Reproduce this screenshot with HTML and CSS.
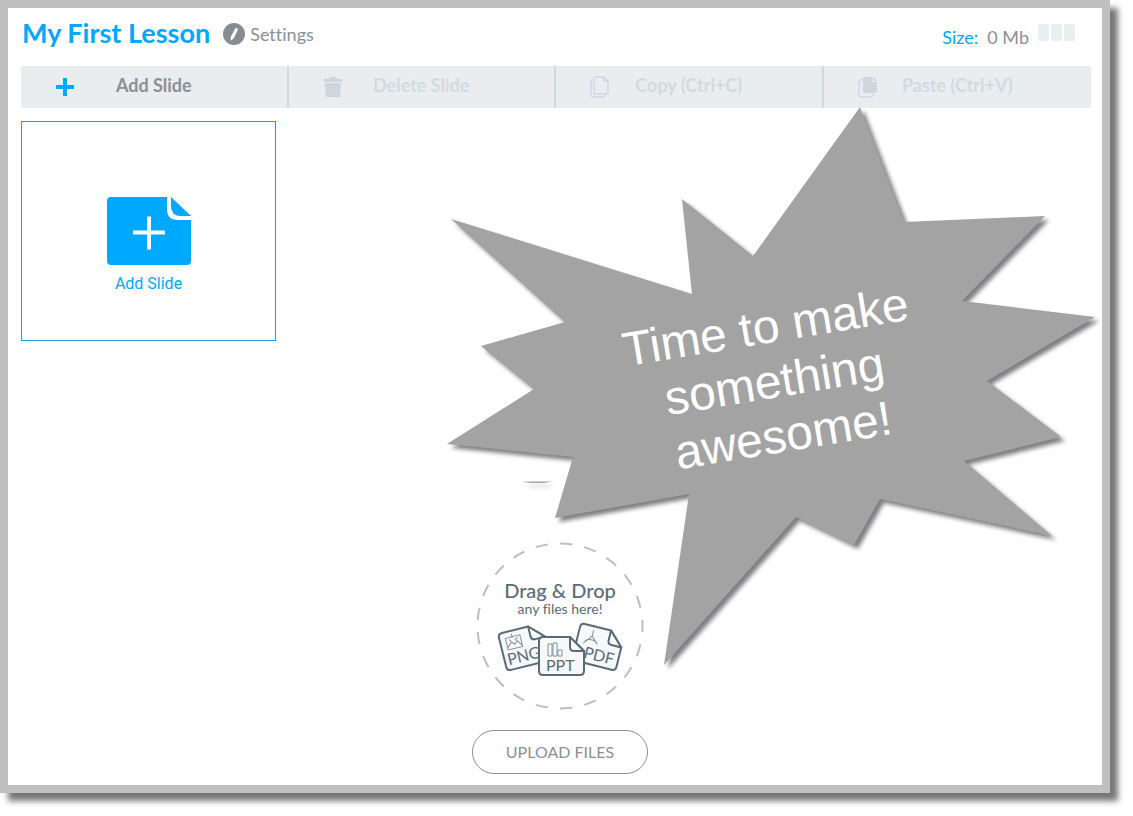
FILE: index.html
```html
<!DOCTYPE html>
<html lang="en">
<head>
<meta charset="utf-8">
<title>My First Lesson</title>
<link rel="stylesheet" href="styles.css">
</head>
<body>
<main class="frame">
  <header class="header">
    <h1 class="title">My First Lesson</h1>
    <button class="settings" type="button">
      <svg class="settings-icon" viewBox="0 0 22 22" aria-hidden="true">
        <circle cx="11" cy="11" r="11" fill="#868c92"/>
        <path d="M12.6 4.8l2.6 1.2-4.6 9.400-3 2.400.2-3.800z" fill="#fff"/>
      </svg>
      Settings
    </button>
    <div class="size">
      <span class="size-label">Size:</span>
      <span class="size-value">0 Mb</span>
      <span class="meter"><i></i><i></i><i></i></span>
    </div>
  </header>

  <nav class="toolbar" aria-label="Slide actions">
    <button class="tool" type="button">
      <svg class="tool-icon" viewBox="0 0 22 22" aria-hidden="true"><path d="M2 11h18M11 2v18" stroke="#00a8ff" stroke-width="4"/></svg>
      <span class="tool-label">Add Slide</span>
    </button>
    <button class="tool" type="button" disabled>
      <svg class="tool-icon" viewBox="0 0 22 22" aria-hidden="true"><path d="M2 3h5l1-2h6l1 2h5v3H2zM3 7h16l-1 14H4z" fill="#cfd5d8"/></svg>
      <span class="tool-label">Delete Slide</span>
    </button>
    <button class="tool" type="button" disabled>
      <svg class="tool-icon" viewBox="0 0 22 22" aria-hidden="true"><g fill="none" stroke="#d3d8db" stroke-width="1.5" stroke-linejoin="round"><path d="M7 1h8l4 4v11q0 2-2 2H7q-2 0-2-2V3q0-2 2-2z"/><path d="M15 1v4h4M5 4q-3 0-3 2v13q0 2 2 2h9q3 0 3-3"/></g></svg>
      <span class="tool-label">Copy (Ctrl+C)</span>
    </button>
    <button class="tool" type="button" disabled>
      <svg class="tool-icon" viewBox="0 0 22 22" aria-hidden="true"><path d="M8 1h7v5h5v9q0 2-2 2H8q-2 0-2-2V3q0-2 2-2zM16 1l4 4h-4z" fill="#cfd5d8"/><path d="M6 4H4Q2 4 2 6v13q0 2 2 2h10q2 0 2-3" fill="none" stroke="#d3d8db" stroke-width="1.5"/></svg>
      <span class="tool-label">Paste (Ctrl+V)</span>
    </button>
  </nav>

  <button class="slide-card" type="button">
    <svg class="slide-icon" viewBox="0 0 84 68" aria-hidden="true">
      <path d="M4 0H60V12Q60 23 71 23H84V64Q84 68 80 68H4Q0 68 0 64V4Q0 0 4 0z" fill="#00a8ff"/>
      <path d="M64 0L84 19H74Q64 19 64 9z" fill="#00a8ff"/>
      <path d="M26 35.500h32M42 19.500v33" stroke="#fff" stroke-width="4"/>
    </svg>
    Add Slide
  </button>

  <section class="upload">
    <div class="dropzone">
      <svg class="dropzone-ring" viewBox="0 0 168 168" aria-hidden="true"><circle cx="84" cy="84" r="82.500" pathLength="504"/></svg>
      <strong class="drop-title">Drag &amp; Drop</strong>
      <span class="drop-note">any files here!</span>
      <svg class="files" viewBox="0 0 126 56">
        <defs>
          <g id="card">
            <path d="M4 0H31L45 14V34Q45 38 41 38H4Q0 38 0 34V4Q0 0 4 0z" fill="#f6f8f9"/>
            <path d="M31 0V10Q31 14 35 14H45z" fill="#fff"/>
          </g>
        </defs>
        <g transform="translate(1 12) rotate(-14)">
          <use href="#card"/>
          <path class="thin" d="M6 6h15v12H6zM13 3v4M6 16l5-5 3 3 3-3 4 6M9 8l2 2M15 10l3-2"/>
          <text x="3" y="33">PNG</text>
        </g>
        <g transform="translate(84 1) rotate(14)">
          <use href="#card"/>
          <path class="thin" d="M14 4v6l-7 9M14 10l7 7M8 16q6-4 12-1"/>
          <text x="10" y="33">PDF</text>
        </g>
        <g transform="translate(42 15)">
          <use href="#card"/>
          <path class="thin" d="M9 7h4v12H9zM14 6h4v13h-4zM19 13h4v6h-4z"/>
          <text x="7" y="34">PPT</text>
        </g>
      </svg>
    </div>
    <button class="upload-button" type="button">UPLOAD FILES</button>
  </section>

  <svg class="burst" viewBox="440 100 662 580" role="img" aria-label="Time to make something awesome!">
    <path class="burst-shape" d="M451 219L692 294 682 199 753 256 860 107 904 222 1045 216 962 301 1095 317 987 381 1061 437 964 461 1052 536 880 499 854 545 796 517 664 665 689 494 555 518 573 457 447 444 534 389 481 346 565 322z"/>
    <path class="burst-shape faint" d="M522 481.500h30l-8 1.500h-14z"/>
    <g class="burst-text" transform="rotate(-9.400 768 343)">
      <text x="768" y="343">Time to make</text>
      <text x="768" y="398">something</text>
      <text x="768" y="453">awesome!</text>
    </g>
  </svg>
</main>
</body>
</html>
```
FILE: styles.css
```css
* {
  box-sizing: border-box;
}

body {
  margin: 0;
  padding: 0 23px 23px 0;
  background: #fff;
  font-family: Lato, "Liberation Sans", sans-serif;
  font-variant-ligatures: none;
  color: #8c9094;
}

button {
  margin: 0;
  border: 0;
  padding: 0;
  background: none;
  color: inherit;
  font: inherit;
  font-variant-ligatures: none;
}

.frame {
  position: relative;
  display: flex;
  flex-direction: column;
  min-height: calc(100vh - 23px);
  border: 8px solid #c0c0c0;
  padding: 0 11px 11px 13px;
  box-shadow: 8px 8px 6px #777;
}

.header {
  display: flex;
  align-items: center;
  height: 58px;
  padding: 0 16px 8px 1px;
}

.title {
  margin: 0;
  color: #00a8ff;
  font-size: 27px;
  line-height: 32px;
  font-weight: 700;
}

.settings {
  display: flex;
  align-items: center;
  gap: 5px;
  margin-left: 13px;
  padding-top: 2px;
  font-size: 18px;
}

.settings-icon {
  width: 22px;
  height: 22px;
}

.size {
  display: flex;
  align-items: center;
  gap: 9px;
  margin-left: auto;
  padding-top: 7px;
  font-size: 18px;
}

.size-label {
  color: #00a8ff;
}

.meter {
  display: flex;
  gap: 2px;
  padding-bottom: 8px;
}

.meter i {
  width: 11px;
  height: 17px;
  border-radius: 2px;
  background: #e9eef1;
}

.toolbar {
  display: grid;
  grid-template-columns: repeat(4, minmax(0, 1fr));
  background: #e9edf0;
}

.tool {
  display: grid;
  grid-template-columns: 88px minmax(0, 1fr) 88px;
  align-items: center;
  justify-items: center;
  height: 42px;
  border-right: 2px solid #d3d8db;
  font-size: 18px;
  font-weight: 700;
}

.tool:last-child {
  border-right: 0;
}

.tool:disabled {
  color: #d5dadd;
}

.tool-icon {
  width: 22px;
  height: 22px;
}

.tool-label {
  padding-bottom: 4px;
  white-space: nowrap;
}

.slide-card {
  display: flex;
  flex-direction: column;
  align-items: center;
  justify-content: center;
  gap: 9px;
  width: 255px;
  height: 220px;
  margin-top: 13px;
  border: 1px solid #1a9de0;
  padding-top: 29px;
  color: #00a8ff;
  font-family: Roboto, "Liberation Sans", sans-serif;
  font-size: 16px;
  line-height: 20px;
}

.slide-icon {
  width: 84px;
  height: 68px;
}

.upload {
  display: flex;
  flex-direction: column;
  align-items: center;
  gap: 20px;
  margin-top: auto;
  padding-left: 8px;
}

.dropzone {
  position: relative;
  display: flex;
  flex-direction: column;
  align-items: center;
  width: 168px;
  height: 168px;
  padding-top: 37px;
  color: #5a6b78;
}

.dropzone-ring {
  position: absolute;
  inset: 0;
  fill: none;
  stroke: #bcbec4;
  stroke-width: 2;
  stroke-dasharray: 12 12;
  stroke-dashoffset: 6;
}

.drop-title {
  font-size: 20px;
  line-height: 22px;
  font-weight: 500;
}

.drop-note {
  font-size: 14px;
  line-height: 16px;
}

.files {
  width: 126px;
  height: 56px;
  margin-top: 5px;
  font-size: 16px;
  fill: #5a6b78;
}

.files #card path {
  stroke: #5a6b78;
  stroke-width: 2;
  stroke-linejoin: round;
}

.files .thin {
  fill: none;
  stroke: #84909a;
  stroke-width: 1;
}

.upload-button {
  width: 176px;
  height: 44px;
  border: 1px solid #8c9094;
  border-radius: 22px;
  padding-bottom: 2px;
  font-size: 16px;
}

.burst {
  position: absolute;
  top: 92px;
  right: 0;
  width: 662px;
  height: 580px;
  overflow: visible;
  pointer-events: none;
}

.burst-shape {
  fill: #a3a3a3;
  filter: drop-shadow(4px 4px 2px rgba(40, 42, 45, 0.6));
}

.burst-shape.faint {
  filter: drop-shadow(3px 4px 2px rgba(40, 42, 45, 0.3));
}

.burst-text {
  fill: #fff;
  font-family: "Liberation Sans", Arial, sans-serif;
  font-size: 48px;
  text-anchor: middle;
}
```
